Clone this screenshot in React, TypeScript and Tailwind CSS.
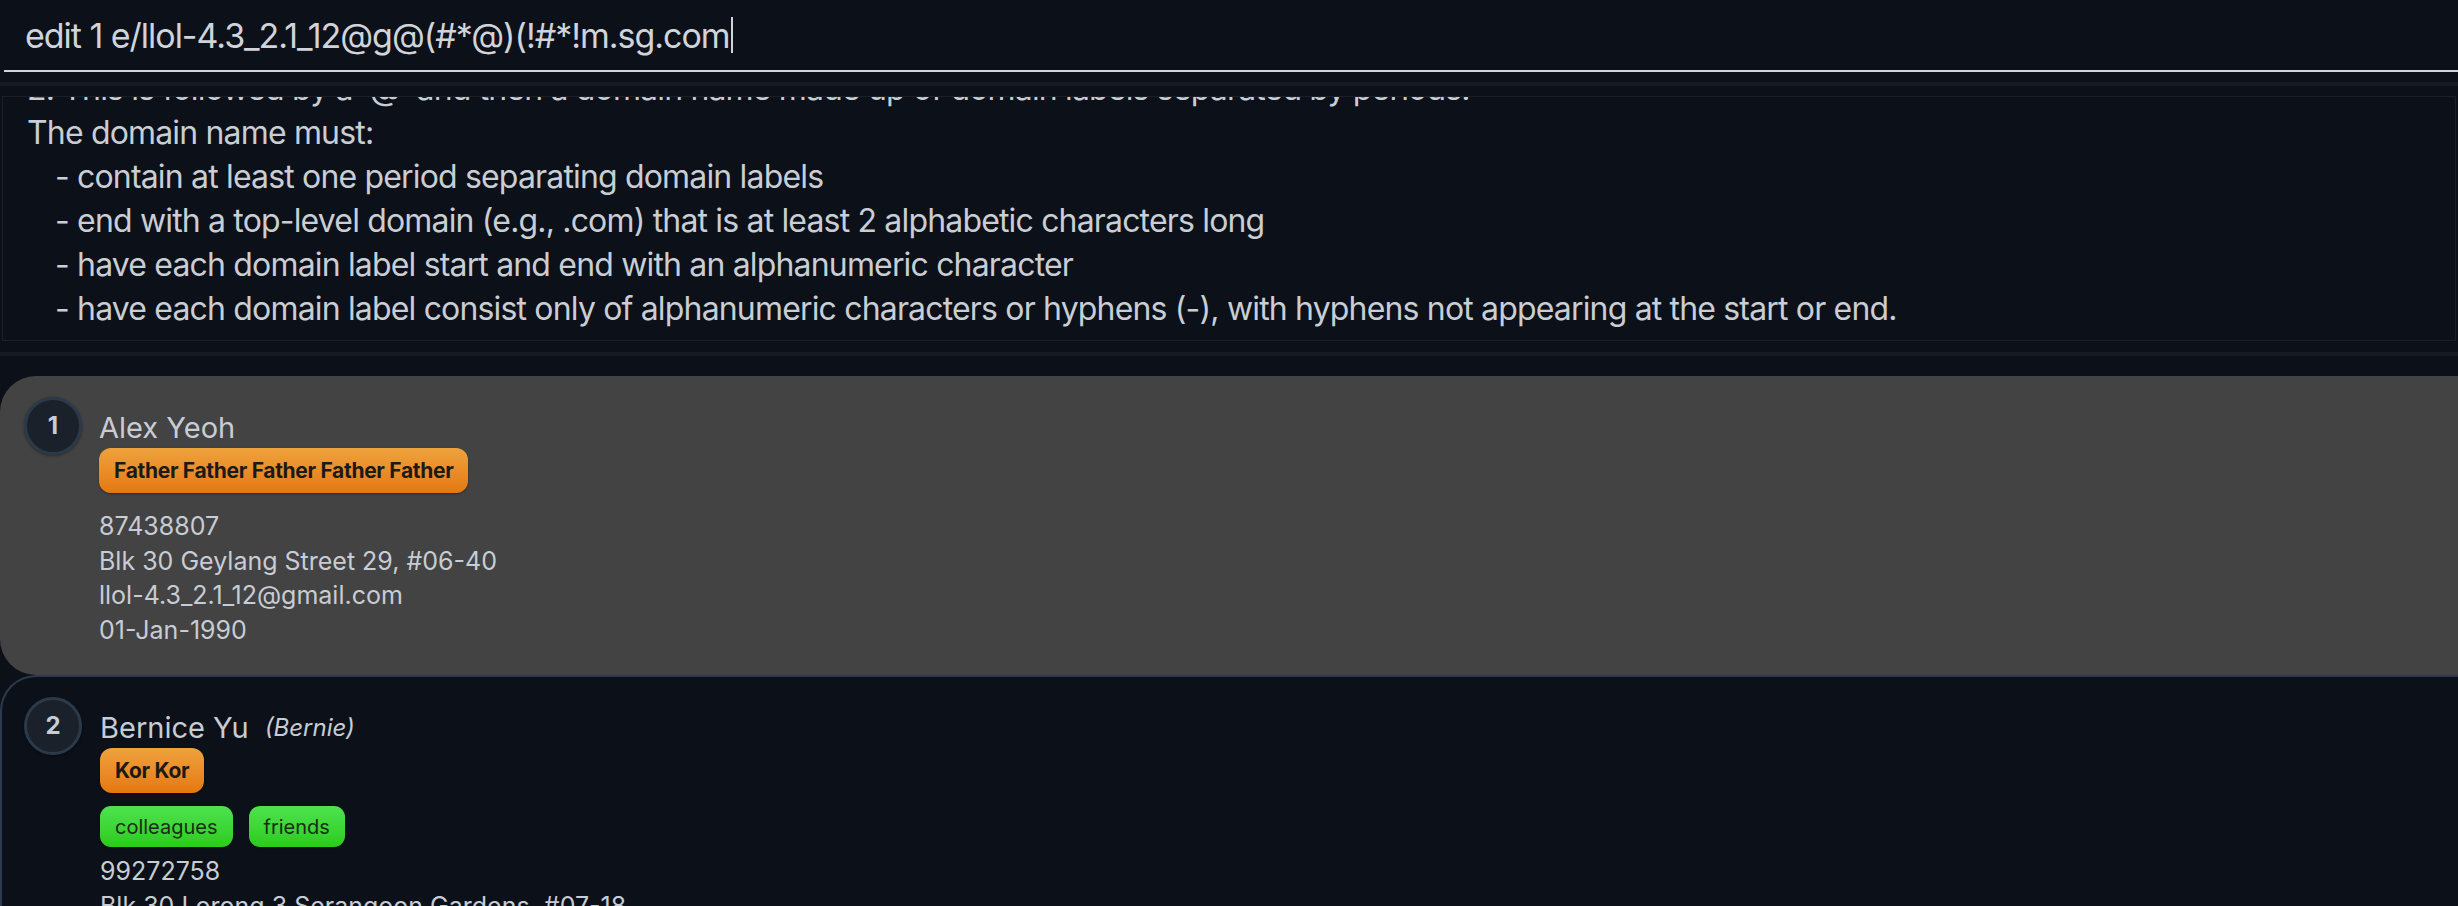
import React from "react";

const resultLines = [
  { text: "2. This is followed by a '@' and then a domain name made up of domain labels separated by periods.", indent: false },
  { text: "The domain name must:", indent: false },
  { text: "- contain at least one period separating domain labels", indent: true },
  { text: "- end with a top-level domain (e.g., .com) that is at least 2 alphabetic characters long", indent: true },
  { text: "- have each domain label start and end with an alphanumeric character", indent: true },
  { text: "- have each domain label consist only of alphanumeric characters or hyphens (-), with hyphens not appearing at the start or end.", indent: true },
];

type Person = {
  id: number;
  name: string;
  nickname?: string;
  relation: string;
  tags: string[];
  phone: string;
  address: string;
  email: string;
  birthday: string;
  selected?: boolean;
};

const people: Person[] = [
  {
    id: 1,
    name: "Alex Yeoh",
    relation: "Father Father Father Father Father",
    tags: [],
    phone: "87438807",
    address: "Blk 30 Geylang Street 29, #06-40",
    email: "llol-4.3_2.1_12@gmail.com",
    birthday: "01-Jan-1990",
    selected: true,
  },
  {
    id: 2,
    name: "Bernice Yu",
    nickname: "Bernie",
    relation: "Kor Kor",
    tags: ["colleagues", "friends"],
    phone: "99272758",
    address: "Blk 30 Lorong 3 Serangoon Gardens, #07-18",
    email: "berniceyu@example.com",
    birthday: "12-Feb-1992",
  },
];

function PersonCard({ p }: { p: Person }) {
  return (
    <div
      className={
        p.selected
          ? "flex rounded-l-[36px] bg-[#434343] pl-[24px] pt-[21px] h-[299px]"
          : "flex rounded-l-[36px] border-2 border-r-0 border-[#2b3a4c] pl-[22px] pt-[20px] h-[320px]"
      }
    >
      <div className="w-[58px] h-[58px] shrink-0 rounded-full bg-[#1b212b] border-[3px] border-[#2b3a4a] shadow-[0_1px_3px_rgba(0,0,0,0.4)] flex items-center justify-center text-[24px] font-bold text-[#c8ccd4]">
        {p.id}
      </div>
      <div className={p.selected ? "ml-[17px] pt-[11px] flex flex-col" : "ml-[18px] pt-[11px] flex flex-col"}>
        <div className="h-[40px] flex items-center gap-[16px] text-[#c8ccd4]">
          <span className="text-[29px]">{p.name}</span>
          {p.nickname && <span className="text-[24px] italic">({p.nickname})</span>}
        </div>
        <div className="flex">
          <span className="h-[45px] px-[15px] flex items-center rounded-[12px] bg-gradient-to-b from-[#eea23c] to-[#e5780e] text-[21px] font-bold tracking-[-0.015em] text-[#1c1a17] shadow-[0_1px_2px_rgba(0,0,0,0.35)]">
            {p.relation}
          </span>
        </div>
        {p.tags.length > 0 && (
          <div className="flex gap-[16px] mt-[13px]">
            {p.tags.map((t) => (
              <span
                key={t}
                className="h-[41px] px-[15px] flex items-center rounded-[11px] bg-gradient-to-b from-[#4ee34e] to-[#2bcb19] text-[20px] text-[#1b2a17] shadow-[0_1px_2px_rgba(0,0,0,0.35)]"
              >
                {t}
              </span>
            ))}
          </div>
        )}
        <div className={p.tags.length > 0 ? "mt-[7px] text-[25px] leading-[34.5px] text-[#c8ccd4]" : "mt-[16px] text-[25px] leading-[34.5px] text-[#c8ccd4]"}>
          <div>{p.phone}</div>
          <div>{p.address}</div>
          <div>{p.email}</div>
          <div>{p.birthday}</div>
        </div>
      </div>
    </div>
  );
}

export default function App() {
  return (
    <div className="w-[2458px] h-[906px] overflow-hidden bg-[#0c1018] font-['Inter','Noto_Sans',sans-serif]">
      {/* command box */}
      <div className="ml-[4px] h-[72px] border-b-2 border-[#d0d5dc]">
        <div className="h-[70px] pl-[21px] flex items-center text-[34px] text-[#d0d4da] tracking-[-0.03em]">
          <span>edit 1 e/llol-4.3_2.1_12@g@(#*@)(!#*!m.sg.com</span>
          <span className="ml-[1px] w-[2px] h-[36px] bg-[#d0d4da]" />
        </div>
      </div>
      <div className="h-[10px]" />
      <div className="h-[4px] bg-[#161a22]" />
      <div className="h-[10px]" />

      {/* result display */}
      <div className="mx-[2px] h-[245px] overflow-hidden border border-[#1b1f28]">
        <div className="-mt-[30px] pl-[24px] text-[32px] tracking-[-0.026em] leading-[44px] text-[#c9cdd4] whitespace-nowrap">
          {resultLines.map((l, i) => (
            <div key={i} className={l.indent ? "pl-[28px]" : ""}>
              {l.text}
            </div>
          ))}
        </div>
      </div>
      <div className="h-[11px]" />
      <div className="h-[4px] bg-[#161a22]" />
      <div className="h-[20px]" />

      {/* person list */}
      <div className="flex flex-col">
        {people.map((p) => (
          <PersonCard key={p.id} p={p} />
        ))}
      </div>
    </div>
  );
}
